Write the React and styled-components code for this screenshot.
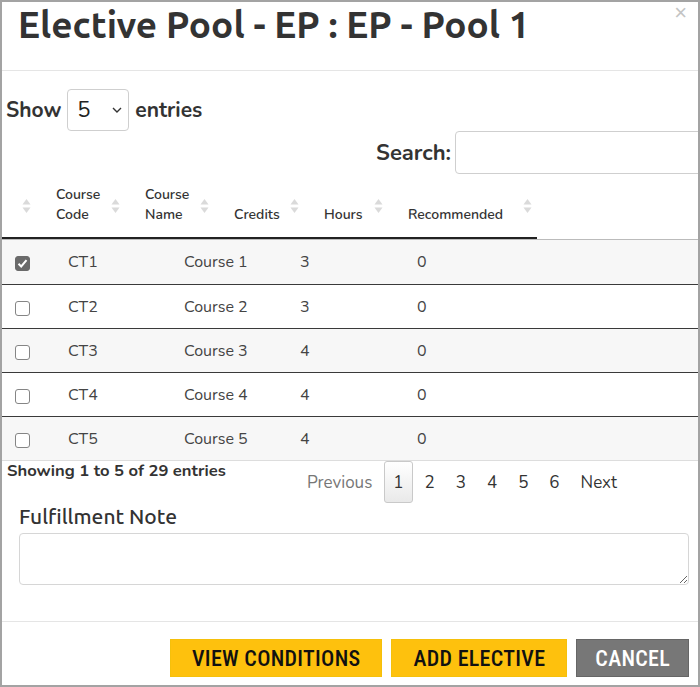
import React, { useState } from 'react';
import styled, { createGlobalStyle } from 'styled-components';

const GlobalStyle = createGlobalStyle`
  html, body {
    margin: 0;
    padding: 0;
    background: #fff;
  }
  * {
    box-sizing: border-box;
  }
`;

const courses = [
  { code: 'CT1', name: 'Course 1', credits: 3, hours: 0, checked: true },
  { code: 'CT2', name: 'Course 2', credits: 3, hours: 0 },
  { code: 'CT3', name: 'Course 3', credits: 4, hours: 0 },
  { code: 'CT4', name: 'Course 4', credits: 4, hours: 0 },
  { code: 'CT5', name: 'Course 5', credits: 4, hours: 0 },
];

const headers = [
  { label: '', width: 34 },
  { label: 'Course\nCode', width: 89 },
  { label: 'Course\nName', width: 89 },
  { label: 'Credits', width: 90 },
  { label: 'Hours', width: 84 },
  { label: 'Recommended', width: 149 },
];

function SortIcon() {
  return (
    <SortWrap>
      <svg width="9" height="16" viewBox="0 0 9 16">
        <path d="M4.5 1 L8.5 6.5 L0.5 6.5 Z" fill="#dadada" />
        <path d="M4.5 15 L8.5 9.5 L0.5 9.5 Z" fill="#dadada" />
      </svg>
    </SortWrap>
  );
}

function CheckBox({ checked }) {
  return (
    <Box checked={checked}>
      {checked && (
        <svg width="11" height="11" viewBox="0 0 11 11">
          <path d="M1.5 5.8 L4.2 8.5 L9.5 2.2" stroke="#fff" strokeWidth="2" fill="none" />
        </svg>
      )}
    </Box>
  );
}

function App() {
  const [note, setNote] = useState('');
  return (
    <>
      <GlobalStyle />
      <Modal>
        <Header>
          <Title>Elective Pool - EP : EP - Pool 1</Title>
          <Close>×</Close>
        </Header>

        <Body>
          <LengthRow>
            Show
            <Select>
              <span>5</span>
              <svg width="10" height="6" viewBox="0 0 10 6">
                <path d="M1 1 L5 5 L9 1" stroke="#333" strokeWidth="1.4" fill="none" />
              </svg>
            </Select>
            entries
          </LengthRow>

          <FilterRow>
            Search:
            <SearchInput />
          </FilterRow>

          <HeadRow>
            {headers.map((h, i) => (
              <HeadCell key={i} style={{ width: h.width }}>
                <span>{h.label}</span>
                <SortIcon />
              </HeadCell>
            ))}
          </HeadRow>

          <TableBody>
            {courses.map((c, i) => (
              <Row key={c.code} odd={i % 2 === 0}>
                <CheckCell>
                  <CheckBox checked={c.checked} />
                </CheckCell>
                <Cell>{c.code}</Cell>
                <Cell>{c.name}</Cell>
                <Cell>{c.credits}</Cell>
                <Cell>{c.hours}</Cell>
              </Row>
            ))}
          </TableBody>

          <InfoRow>
            <Info>Showing 1 to 5 of 29 entries</Info>
            <Pager>
              <PageButton disabled>Previous</PageButton>
              <PageButton current>1</PageButton>
              <PageButton>2</PageButton>
              <PageButton>3</PageButton>
              <PageButton>4</PageButton>
              <PageButton>5</PageButton>
              <PageButton>6</PageButton>
              <PageButton>Next</PageButton>
            </Pager>
          </InfoRow>

          <NoteSection>
            <NoteLabel>Fulfillment Note</NoteLabel>
            <NoteArea value={note} onChange={(e) => setNote(e.target.value)} />
          </NoteSection>
        </Body>

        <Footer>
          <ActionButton>VIEW CONDITIONS</ActionButton>
          <ActionButton>ADD ELECTIVE</ActionButton>
          <ActionButton variant="gray">CANCEL</ActionButton>
        </Footer>
      </Modal>
    </>
  );
}

export default App;

const Modal = styled.div`
  width: 700px;
  height: 687px;
  border: 2px solid #a3a3a3;
  overflow: hidden;
  display: flex;
  flex-direction: column;
  font-family: 'Nunito', 'Lato', 'Noto Sans', sans-serif;
  color: #333;
  background: #fff;
`;

const Header = styled.div`
  height: 69px;
  flex-shrink: 0;
  border-bottom: 1px solid #e5e5e5;
  display: flex;
  justify-content: space-between;
  align-items: flex-start;
  padding: 0 11px 0 16px;
`;

const Title = styled.h2`
  margin: 0;
  padding-top: 1px;
  font-family: 'Ubuntu', 'Roboto', 'Noto Sans', sans-serif;
  font-weight: 700;
  font-size: 37px;
  line-height: 43px;
  color: #333;
`;

const Close = styled.span`
  font-family: 'Liberation Sans', Arial, sans-serif;
  font-size: 22px;
  line-height: 22px;
  color: #c4c4c4;
`;

const Body = styled.div`
  flex: 1;
  display: flex;
  flex-direction: column;
`;

const LengthRow = styled.div`
  display: flex;
  align-items: center;
  gap: 6px;
  margin: 18px 0 0 4px;
  font-size: 21px;
  font-weight: 700;
  height: 42px;
`;

const Select = styled.div`
  width: 62px;
  height: 42px;
  border: 1px solid #cfcfcf;
  border-radius: 4px;
  display: flex;
  align-items: center;
  justify-content: space-between;
  padding: 0 6px 0 9px;
  font-weight: 400;
  font-size: 22px;
  color: #222;
`;

const FilterRow = styled.div`
  display: flex;
  align-items: center;
  justify-content: flex-end;
  gap: 4px;
  margin-right: -60px;
  height: 43px;
  font-size: 22px;
  font-weight: 700;
`;

const SearchInput = styled.input`
  width: 303px;
  height: 43px;
  border: 1px solid #cfcfcf;
  border-radius: 4px;
  outline: none;
`;

const HeadRow = styled.div`
  display: flex;
  width: 535px;
  height: 65px;
  border-bottom: 2px solid #222;
`;

const HeadCell = styled.div`
  display: flex;
  justify-content: space-between;
  align-items: flex-end;
  padding: 0 5px 12px 20px;
  font-size: 14px;
  font-weight: 600;
  line-height: 20px;
  color: #333;
  white-space: pre-line;
`;

const SortWrap = styled.span`
  display: flex;
  align-self: flex-start;
  margin-top: 24px;
`;

const TableBody = styled.div`
  border-top: 1px solid #bbb;
  border-bottom: 1px solid #ddd;
`;

const Row = styled.div`
  display: grid;
  grid-template-columns: 66px 116px 116px 117px 1fr;
  align-items: center;
  height: 44px;
  background: ${(p) => (p.odd ? '#f7f7f7' : '#fff')};
  & + & {
    border-top: 1px solid #3a3a3a;
  }
`;

const CheckCell = styled.div`
  padding-left: 13px;
  display: flex;
  align-items: center;
  padding-top: 3px;
`;

const Box = styled.span`
  width: 15px;
  height: 15px;
  border-radius: 3px;
  border: 1px solid ${(p) => (p.checked ? '#6a6a6a' : '#858585')};
  background: ${(p) => (p.checked ? '#6a6a6a' : '#fff')};
  display: flex;
  align-items: center;
  justify-content: center;
`;

const Cell = styled.div`
  font-size: 16px;
  color: #444;
`;

const InfoRow = styled.div`
  display: flex;
  justify-content: space-between;
  align-items: flex-start;
  padding: 0 72px 0 5px;
`;

const Info = styled.div`
  font-size: 16.6px;
  font-weight: 700;
  line-height: 20px;
`;

const Pager = styled.div`
  display: flex;
`;

const PageButton = styled.span`
  height: 42px;
  display: flex;
  align-items: center;
  padding: 0 8px;
  margin-left: 3px;
  font-size: 17px;
  border-radius: 3px;
  color: ${(p) => (p.disabled ? '#777' : '#333')};
  border: 1px solid ${(p) => (p.current ? '#c9c9c9' : 'transparent')};
  background: ${(p) => (p.current ? 'linear-gradient(#fff, #e9e9e9)' : 'transparent')};
`;

const NoteSection = styled.div`
  padding: 0 9px 0 17px;
`;

const NoteLabel = styled.div`
  font-family: 'Ubuntu', 'Roboto', 'Noto Sans', sans-serif;
  font-size: 21px;
  font-weight: 500;
  line-height: 26px;
`;

const NoteArea = styled.textarea`
  display: block;
  width: 100%;
  height: 52px;
  margin-top: 4px;
  border: 1px solid #d6d6d6;
  border-radius: 4px;
  resize: vertical;
  outline: none;
`;

const Footer = styled.div`
  flex-shrink: 0;
  border-top: 1px solid #e5e5e5;
  display: flex;
  justify-content: flex-end;
  gap: 9px;
  padding: 17px 9px 8px 0;
`;

const ActionButton = styled.button`
  height: 38px;
  padding: 0 ${(p) => (p.variant === 'gray' ? '18px' : '21px')};
  border: 1px solid ${(p) => (p.variant === 'gray' ? '#666' : '#f5c00b')};
  background: ${(p) => (p.variant === 'gray' ? '#777' : '#fec10d')};
  color: ${(p) => (p.variant === 'gray' ? '#fff' : '#111')};
  font-family: 'Liberation Sans Narrow', 'Roboto Condensed', 'Roboto', sans-serif;
  font-size: 22px;
  font-weight: 500;
  letter-spacing: 0.3px;
  cursor: pointer;
`;
